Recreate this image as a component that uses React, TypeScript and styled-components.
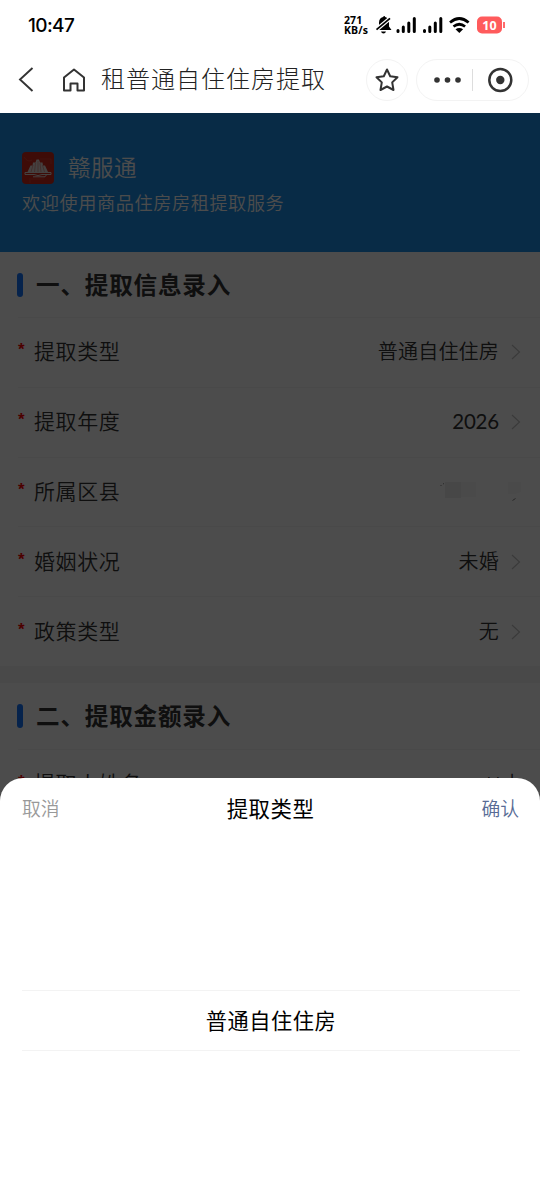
import React from "react";
import styled, { createGlobalStyle } from "styled-components";

const Global = createGlobalStyle`
  * { box-sizing: border-box; }
  body { margin: 0; background: #fff; font-family: Lato, "Noto Sans CJK SC", sans-serif; }
`;
const cjk = `"Noto Sans CJK SC", sans-serif`;

const Phone = styled.div`
  position: relative;
  width: 540px;
  height: 1200px;
  overflow: hidden;
  background: #fff;
  display: flex;
  flex-direction: column;
`;
const StatusBar = styled.div`
  height: 50px;
  flex: none;
  display: flex;
  align-items: center;
  padding: 0 35px 0 28px;
  color: #000;
`;
const Clock = styled.span`
  font: 500 19px/24px Inter, sans-serif;
  letter-spacing: -0.6px;
  margin-top: 2px;
  flex: 1;
`;
const Speed = styled.div`
  display: flex;
  flex-direction: column;
  font: 700 10.500px/10px "Open Sans", sans-serif;
  letter-spacing: 0.1px;
  width: 31px;
`;
const NavBar = styled.div`
  height: 63px;
  flex: none;
  display: flex;
  align-items: center;
  padding: 0 11px 3px 18px;
`;
const NavTitle = styled.h1`
  flex: 1;
  margin: -4px 0 0 14px;
  font: 300 24px/32px ${cjk};
  letter-spacing: 1px;
  color: #222;
  white-space: nowrap;
`;
const Capsule = styled.div<{ $w: number }>`
  width: ${(p) => p.$w}px;
  height: 42px;
  flex: none;
  border: 1px solid #f3f3f3;
  border-radius: 21px;
  display: flex;
  align-items: center;
  justify-content: center;
  margin-left: 8px;
`;
const Content = styled.div`
  position: relative;
  flex: 1;
  min-height: 0;
  overflow: hidden;
`;
const Overlay = styled.div`
  position: absolute;
  inset: 0;
  background: rgba(0, 0, 0, 0.7);
`;
const Banner = styled.div`
  height: 139px;
  background: #1b8fe9;
  padding: 39px 22px 0;
  color: #fff;
`;
const Brand = styled.div`
  display: flex;
  align-items: center;
  gap: 14px;
  height: 32px;
`;
const BrandName = styled.span`
  margin-top: -4px;
  font: 350 22.5px/32px ${cjk};
  letter-spacing: 0.5px;
`;
const Welcome = styled.div`
  margin-top: 5px;
  font: 350 18.2px/26px ${cjk};
  letter-spacing: 0.55px;
`;
const SectionHead = styled.h2<{ $h: number }>`
  margin: 0;
  height: ${(p) => p.$h}px;
  display: flex;
  align-items: center;
  gap: 13px;
  padding: 0 17px;
  font: 700 23.6px/32px ${cjk};
  letter-spacing: 0.8px;
  color: #333;
`;
const HeadText = styled.span`
  margin-top: -1px;
`;
const Marker = styled.span`
  width: 6px;
  height: 24px;
  border-radius: 3px;
  background: #1677ff;
`;
const Row = styled.div`
  height: 69.8px;
  margin-left: 18px;
  padding-right: 19px;
  border-top: 1px solid #f3f3f3;
  display: flex;
  align-items: center;
`;
const Required = styled.span`
  width: 16px;
  margin-top: -4px;
  color: #f00;
  font: 700 17px/20px "Liberation Sans", sans-serif;
`;
const Label = styled.span`
  flex: 1;
  margin-top: -4px;
  font: 350 21px/30px ${cjk};
  letter-spacing: 0.6px;
  color: #333;
`;
const Value = styled.span<{ $last?: boolean }>`
  font: 350 20px/28px ${cjk};
  letter-spacing: 0.2px;
  color: #333;
  margin: -2px ${(p) => (p.$last ? -2 : 12)}px 0 0;
`;
const Digits = styled.span`
  font: 400 20.5px/28px Lato, sans-serif;
  letter-spacing: -0.2px;
`;
const Stars = styled.span`
  font: 400 21px/20px "Liberation Sans", sans-serif;
  letter-spacing: 0.8px;
`;
const Divider = styled.div`
  height: 17px;
  background: #f5f5f5;
`;
const Sheet = styled.section`
  position: absolute;
  left: 0;
  right: 0;
  bottom: 0;
  height: 422px;
  border-radius: 23px 23px 0 0;
  background: #fff;
`;
const SheetHead = styled.header`
  height: 60px;
  padding: 0 21px 0 22px;
  display: grid;
  grid-template-columns: 1fr auto 1fr;
  align-items: center;
`;
const SheetAction = styled.button<{ $c: string; $end?: boolean }>`
  border: 0;
  padding: 0;
  background: none;
  text-align: ${(p) => (p.$end ? "right" : "left")};
  font: 350 18.8px/28px ${cjk};
  color: ${(p) => p.$c};
`;
const SheetTitle = styled.strong`
  font: 400 21.4px/30px ${cjk};
  letter-spacing: 0.5px;
  color: #000;
`;
const Picker = styled.div`
  margin: 152px 20px 0 22px;
  height: 61px;
  padding-bottom: 2px;
  border: solid #f3f3f3;
  border-width: 1px 0;
  display: flex;
  align-items: center;
  justify-content: center;
  font: 400 21.2px/30px ${cjk};
  letter-spacing: 0.6px;
  color: #000;
`;

const Chevron = () => (
  <svg width="10" height="16" viewBox="0 0 10 16" fill="none" stroke="#c2c2c2" strokeWidth="1.2">
    <path d="M1 1l7.500 7L1 15" />
  </svg>
);

const MaskedValue = () => (
  <svg width="86" height="30" viewBox="435 475 86 30">
    <rect x="445" y="480" width="16" height="16" fill="#efefef" transform="translate(0 0)" />
    <rect x="461" y="480" width="15" height="15" fill="#f9f9f9" />
    <path d="M508 480h13v10l-5 2h-8z" fill="#f9f9f9" />
    <path d="M440.500 484l1-1M443 482l1-.5M512.500 498.500l3-2" stroke="#888" strokeWidth="1" />
  </svg>
);

const StatusIcons = () => (
  <svg width="130" height="24" viewBox="375 13 130 24">
    <path d="M376.500 30L379 26.500V22.500c0-3.500 2.200-5.200 4.200-5.500.2-1.200 1.800-1.200 2 0 2.500.5 3.800 2.500 3.800 5.500v4l2.500 3.500z" />
    <path d="M381 31.500h5a2.600 2.600 0 0 1-5 0" />
    <path d="M375.500 30.500L391 17.500" stroke="#fff" strokeWidth="4.200" />
    <path d="M376.500 29.700L390 18.300" stroke="#000" strokeWidth="1.700" />
    {[397, 423.500].map((x) => (
      <g key={x} stroke="#000" strokeWidth="3" strokeLinecap="round">
        <path d={`M${x + 1} 30.500v1M${x + 6.300} 27v4.500M${x + 11.800} 23v8.500M${x + 17.300} 18.500v13`} />
      </g>
    ))}
    <g fill="none" stroke="#000" strokeWidth="2.700">
      <path d="M450 22.500q9.300-8 18.600 0M453.500 26.500q5.800-4.500 11.600 0" />
    </g>
    <path d="M455.500 29.300q3.800-2.500 7.600 0L459.300 33z" />
    <rect x="477" y="16.500" width="25" height="17" rx="5" fill="#ff5b5c" />
    <path d="M504 22v6" stroke="#ff5b5c" strokeWidth="1.800" />
    <text x="489.500" y="29.800" textAnchor="middle" fill="#fff" fontFamily="Open Sans" fontWeight="700" fontSize="12.500">10</text>
  </svg>
);

const Logo = () => (
  <svg width="32" height="32" viewBox="0 0 32 32">
    <rect width="32" height="32" rx="4" fill="#d02a1c" />
    <path d="M2 5q4 6 8 3M18 7h11v5M8 26v5M9 27h13" stroke="#dc4a3c" strokeWidth=".7" fill="none" />
    <path d="M5.500 20l3-6.500h2l.5-3h2.500l1-3h2.500l1 3h2.500l.5 3h2l3 6.500z" fill="#e8dcda" />
    <path d="M9 20l2-7M12.500 20l1-9M16 20V9M19 20l-1-9M22.500 20l-2-7" stroke="#d04436" strokeWidth=".4" />
    <path d="M3 20.500v2h9q4 2 8 0h9v-2zM11 24.800h12l1.500-2" fill="none" stroke="#e8dcda" strokeWidth="1" />
  </svg>
);

const FIELDS = [
  { label: "提取类型", value: "普通自住住房" },
  { label: "提取年度", value: <Digits>2026</Digits> },
  { label: "所属区县", value: null },
  { label: "婚姻状况", value: "未婚" },
  { label: "政策类型", value: "无" },
];

export default function App() {
  return (
    <Phone>
      <Global />
      <StatusBar>
        <Clock>10:47</Clock>
        <Speed><span>271</span><span>KB/s</span></Speed>
        <StatusIcons />
      </StatusBar>
      <NavBar>
        <svg width="69" height="30" viewBox="18 65 69 30" fill="none" stroke="#333" strokeWidth="1.900">
          <path d="M32.500 68L20 79.500L32.500 91" />
          <path d="M64 77.500L74 69.500L84 77.500V90.500H77.500V83.500H70.500V90.500H64z" strokeWidth="2" strokeLinejoin="round" />
        </svg>
        <NavTitle>租普通自住住房提取</NavTitle>
        <Capsule $w={42}>
          <svg width="26" height="26" viewBox="0 0 26 26" fill="none" stroke="#333" strokeWidth="2" strokeLinejoin="round">
            <path d="M13 2.500l3.200 6.700 7.300 1-5.300 5.200 1.300 7.600L13 19.500 6.500 23l1.300-7.600L2.500 10.200l7.300-1z" />
          </svg>
        </Capsule>
        <Capsule $w={113}>
          <svg width="111" height="40" viewBox="417 60 111 40" fill="#333">
            <circle cx="437" cy="80" r="2.800" />
            <circle cx="447.500" cy="80" r="2.800" />
            <circle cx="458" cy="80" r="2.800" />
            <path d="M472.500 69v22" stroke="#ddd" />
            <circle cx="500.300" cy="80" r="11" fill="none" stroke="#333" strokeWidth="2.500" />
            <circle cx="500.300" cy="80" r="4.200" />
          </svg>
        </Capsule>
      </NavBar>
      <Content>
        <Banner>
          <Brand><Logo /><BrandName>赣服通</BrandName></Brand>
          <Welcome>欢迎使用商品住房房租提取服务</Welcome>
        </Banner>
        <SectionHead $h={65}><Marker /><HeadText>一、提取信息录入</HeadText></SectionHead>
        {FIELDS.map((f) => (
          <Row key={f.label}>
            <Required>*</Required>
            <Label>{f.label}</Label>
            {f.value ? (
              <>
                <Value>{f.value}</Value>
                <Chevron />
              </>
            ) : (
              <MaskedValue />
            )}
          </Row>
        ))}
        <Divider />
        <SectionHead $h={66}><Marker /><HeadText>二、提取金额录入</HeadText></SectionHead>
        <Row>
          <Required>*</Required>
          <Label>提取人姓名</Label>
          <Value $last><Stars>**</Stars>上</Value>
        </Row>
        <Overlay />
      </Content>
      <Sheet>
        <SheetHead>
          <SheetAction $c="#999">取消</SheetAction>
          <SheetTitle>提取类型</SheetTitle>
          <SheetAction $c="#576b95" $end>确认</SheetAction>
        </SheetHead>
        <Picker>普通自住住房</Picker>
      </Sheet>
    </Phone>
  );
}
